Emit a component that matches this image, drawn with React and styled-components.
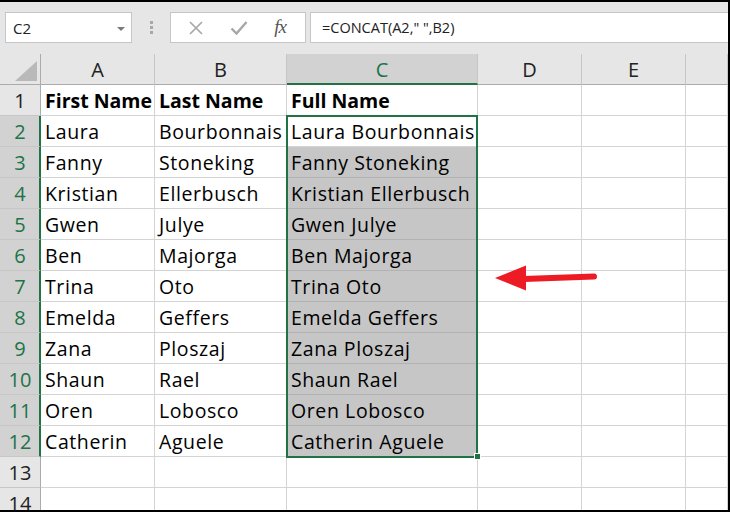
import React from 'react'
import styled, { createGlobalStyle } from 'styled-components'

const GREEN = '#217346'

const GlobalStyle = createGlobalStyle`
  html, body {
    margin: 0;
    padding: 0;
    background: #ffffff;
    overflow: hidden;
  }
`

const Frame = styled.div`
  position: relative;
  width: 730px;
  height: 512px;
  box-sizing: border-box;
  border-top: 2px solid #000;
  border-right: 2px solid #000;
  border-bottom: 2px solid #000;
  background: #fff;
  overflow: hidden;
  display: flex;
  flex-direction: column;
`

const Toolbar = styled.div`
  height: 52px;
  flex: none;
  box-sizing: border-box;
  background: #e6e6e6;
  padding: 10px 0 0 5px;
  display: flex;
  align-items: flex-start;
`

const NameBox = styled.div`
  width: 127px;
  height: 31px;
  box-sizing: border-box;
  background: #fff;
  border: 1px solid #c6c6c6;
  display: flex;
  align-items: center;
  justify-content: space-between;
  padding: 0 6px 0 7px;
  font-family: "Open Sans", "Noto Sans", sans-serif;
  font-size: 15px;
  color: #222;
`

const DropArrow = styled.span`
  width: 0;
  height: 0;
  border-left: 4px solid transparent;
  border-right: 4px solid transparent;
  border-top: 4px solid #7a7a7a;
  margin-top: 2px;
`

const Grip = styled.div`
  width: 38px;
  height: 31px;
  display: flex;
  flex-direction: column;
  align-items: center;
  justify-content: center;
  gap: 2px;
`

const GripDot = styled.span`
  width: 3px;
  height: 3px;
  background: #a8a8a8;
`

const FxBox = styled.div`
  width: 136px;
  height: 31px;
  box-sizing: border-box;
  background: #fff;
  border: 1px solid #c6c6c6;
  display: flex;
  align-items: center;
  justify-content: space-around;
  padding: 0 6px 0 4px;
`

const FxText = styled.span`
  font-family: "Liberation Serif", "DejaVu Serif", serif;
  font-style: italic;
  font-size: 19px;
  color: #555;
  letter-spacing: -1px;
  margin-top: -2px;
`

const FormulaInput = styled.div`
  flex: 1;
  height: 31px;
  margin-left: 4px;
  box-sizing: border-box;
  background: #fff;
  border: 1px solid #c6c6c6;
  border-right: none;
  display: flex;
  align-items: center;
  padding-left: 11px;
  font-family: "Open Sans", "Noto Sans", sans-serif;
  font-size: 14.5px;
  color: #222;
`

const Sheet = styled.div`
  position: relative;
  flex: 1;
  display: grid;
  grid-template-columns: 41px 114px 132px 191px 104px 104px 1fr;
  grid-auto-rows: 31px;
  align-content: start;
  font-family: "Open Sans", "Noto Sans", sans-serif;
`

const Corner = styled.div`
  position: relative;
  box-sizing: border-box;
  background: #e6e6e6;
  border-right: 1px solid #ababab;
  border-bottom: 1px solid #ababab;
  &::after {
    content: '';
    position: absolute;
    right: 3px;
    bottom: 3px;
    width: 0;
    height: 0;
    border-left: 22px solid transparent;
    border-bottom: 20px solid #b9b9b9;
  }
`

const ColHead = styled.div`
  box-sizing: border-box;
  background: ${({ $sel }) => ($sel ? '#d2d2d2' : '#e6e6e6')};
  border-right: 1px solid #c6c6c6;
  border-bottom: ${({ $sel }) => ($sel ? `2px solid ${GREEN}` : '1px solid #ababab')};
  color: ${({ $sel }) => ($sel ? GREEN : '#222')};
  font-size: 20px;
  display: flex;
  align-items: center;
  justify-content: center;
  padding-top: ${({ $sel }) => ($sel ? '1px' : '0')};
`

const RowHead = styled.div`
  box-sizing: border-box;
  background: ${({ $sel }) => ($sel ? '#d2d2d2' : '#e6e6e6')};
  border-right: ${({ $sel }) => ($sel ? `2px solid ${GREEN}` : '1px solid #ababab')};
  border-bottom: 1px solid #c6c6c6;
  color: ${({ $sel }) => ($sel ? GREEN : '#222')};
  font-size: 20px;
  display: flex;
  align-items: center;
  justify-content: center;
  padding-left: ${({ $sel }) => ($sel ? '1px' : '0')};
`

const Cell = styled.div`
  box-sizing: border-box;
  background: ${({ $fill }) => ($fill ? '#c6c6c6' : '#fff')};
  border-right: 1px solid ${({ $fill }) => ($fill ? '#b2b2b2' : '#d4d4d4')};
  border-bottom: 1px solid ${({ $fill }) => ($fill ? '#b2b2b2' : '#d4d4d4')};
  font-size: 19.5px;
  font-weight: ${({ $bold }) => ($bold ? 700 : 400)};
  letter-spacing: ${({ $bold }) => ($bold ? '0' : '0.6px')};
  color: #000;
  white-space: nowrap;
  overflow: visible;
  padding: 0 0 1px 4px;
  display: flex;
  align-items: flex-end;
  position: relative;
  z-index: ${({ $over }) => ($over ? 1 : 0)};
`

const Selection = styled.div`
  position: absolute;
  left: 286px;
  top: 61px;
  width: 192px;
  height: 343px;
  box-sizing: border-box;
  border: 2px solid ${GREEN};
  pointer-events: none;
  z-index: 2;
`

const FillHandle = styled.div`
  position: absolute;
  left: 474px;
  top: 399px;
  width: 7px;
  height: 7px;
  box-sizing: border-box;
  background: ${GREEN};
  border: 1px solid #fff;
  z-index: 3;
`

const Arrow = styled.svg`
  position: absolute;
  left: 493px;
  top: 208px;
  z-index: 3;
`

const people = [
  ['Laura', 'Bourbonnais'],
  ['Fanny', 'Stoneking'],
  ['Kristian', 'Ellerbusch'],
  ['Gwen', 'Julye'],
  ['Ben', 'Majorga'],
  ['Trina', 'Oto'],
  ['Emelda', 'Geffers'],
  ['Zana', 'Ploszaj'],
  ['Shaun', 'Rael'],
  ['Oren', 'Lobosco'],
  ['Catherin', 'Aguele'],
]

const columns = ['A', 'B', 'C', 'D', 'E', '']

const XIcon = () => (
  <svg width="16" height="16" viewBox="0 0 16 16">
    <path d="M2 2 L14 14 M14 2 L2 14" stroke="#a6a6a6" strokeWidth="1.6" fill="none" />
  </svg>
)

const CheckIcon = () => (
  <svg width="18" height="16" viewBox="0 0 18 16">
    <path d="M1.5 8.5 L6.5 13.5 L16.5 2" stroke="#a6a6a6" strokeWidth="2.4" fill="none" />
  </svg>
)

const App = () => {
  const rows = [['First Name', 'Last Name', 'Full Name'], ...people.map(([f, l]) => [f, l, `${f} ${l}`])]
  return (
    <Frame>
      <GlobalStyle />
      <Toolbar>
        <NameBox>
          <span>C2</span>
          <DropArrow />
        </NameBox>
        <Grip>
          <GripDot />
          <GripDot />
          <GripDot />
        </Grip>
        <FxBox>
          <XIcon />
          <CheckIcon />
          <FxText>fx</FxText>
        </FxBox>
        <FormulaInput>=CONCAT(A2," ",B2)</FormulaInput>
      </Toolbar>
      <Sheet>
        <Corner />
        {columns.map((c, i) => (
          <ColHead key={i} $sel={c === 'C'}>{c}</ColHead>
        ))}
        {rows.map((r, i) => {
          const n = i + 1
          const sel = n >= 2
          return (
            <React.Fragment key={n}>
              <RowHead $sel={sel}>{n}</RowHead>
              <Cell $bold={n === 1} $over>{r[0]}</Cell>
              <Cell $bold={n === 1} $over>{r[1]}</Cell>
              <Cell $bold={n === 1} $fill={n >= 3}>{r[2]}</Cell>
              <Cell />
              <Cell />
              <Cell />
            </React.Fragment>
          )
        })}
        {[13, 14].map((n) => (
          <React.Fragment key={n}>
            <RowHead>{n}</RowHead>
            <Cell />
            <Cell />
            <Cell />
            <Cell />
            <Cell />
            <Cell />
          </React.Fragment>
        ))}
        <Selection />
        <FillHandle />
        <Arrow width="106" height="32" viewBox="0 0 106 32">
          <path d="M31 17 L101 14.5" stroke="#ed1c24" strokeWidth="6" strokeLinecap="round" fill="none" />
          <polygon points="2,16 33,3.5 33,28.5" fill="#ed1c24" />
        </Arrow>
      </Sheet>
    </Frame>
  )
}

export default App
